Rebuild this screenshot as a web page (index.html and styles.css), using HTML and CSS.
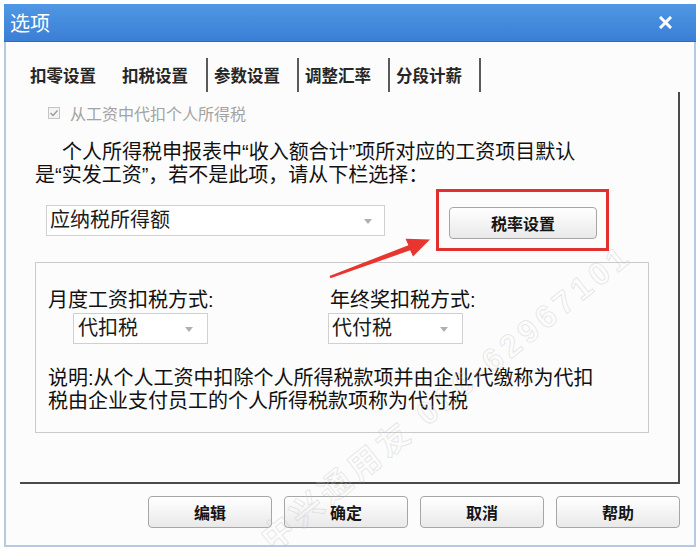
FILE: index.html
```html
<!DOCTYPE html>
<html lang="zh-CN">
<head>
<meta charset="utf-8">
<title>选项</title>
<link rel="stylesheet" href="styles.css">
</head>
<body>
<div class="window">
  <div class="titlebar">
    <span class="title">选项</span>
    <svg class="close" width="13" height="13" viewBox="0 0 13 13"><path d="M2 2 L11 11 M11 2 L2 11" stroke="#fff" stroke-width="3" stroke-linecap="square"/></svg>
  </div>
  <div class="body">
    <div class="tabs">
      <span class="tab t1">扣零设置</span>
      <span class="tab t2">扣税设置</span>
      <span class="tab sep">参数设置</span>
      <span class="tab sep">调整汇率</span>
      <span class="tab sep">分段计薪</span>
      <span class="tab sep end"></span>
    </div>
    <div class="panel">
      <label class="check"><span class="box"><svg width="10" height="10" viewBox="0 0 10 10"><path d="M1.5 5 L4 7.5 L8.5 2.5" fill="none" stroke="#9a9a9a" stroke-width="1.4"/></svg></span>从工资中代扣个人所得税</label>
      <p class="desc">个人所得税申报表中“收入额合计”项所对应的工资项目默认<br>是“实发工资”，若不是此项，请从下栏选择：</p>
      <div class="row">
        <div class="combo wide">应纳税所得额</div>
        <div class="highlight"><button class="btn rate">税率设置</button></div>
      </div>
      <div class="group">
        <div class="cols">
          <div class="col">
            <div class="lbl">月度工资扣税方式:</div>
            <div class="combo small c1">代扣税</div>
          </div>
          <div class="col">
            <div class="lbl">年终奖扣税方式:</div>
            <div class="combo small c2">代付税</div>
          </div>
        </div>
        <p class="note">说明:从个人工资中扣除个人所得税款项并由企业代缴称为代扣<br>税由企业支付员工的个人所得税款项称为代付税</p>
      </div>
    </div>
    <div class="actions">
      <button class="btn act">编辑</button>
      <button class="btn act">确定</button>
      <button class="btn act">取消</button>
      <button class="btn act">帮助</button>
    </div>
  </div>
</div>
<svg class="pointer" width="700" height="551" viewBox="0 0 700 551">
  <polygon points="329.5,276 408.4,245.2 405.5,238.8 430,239.5 413,256.5 410.2,250.3 330.5,278.2" fill="#e8352f"/>
</svg>
<div class="watermark">中兴通用友 010-62967101</div>
</body>
</html>
```

FILE: styles.css
```css
* { box-sizing: border-box; }
html, body { margin: 0; padding: 0; }
body {
  width: 700px;
  height: 551px;
  overflow: hidden;
  position: relative;
  background: #ffffff;
  font-family: "Liberation Sans", "Noto Sans CJK SC", sans-serif;
  color: #111;
}
.window {
  margin: 4px 0 0 4px;
  width: 692px;
  height: 543px;
  display: flex;
  flex-direction: column;
}
.titlebar {
  height: 38px;
  flex: none;
  background: linear-gradient(#5097e4, #3a7fd5);
  border-bottom: 1px solid #2e6cbe;
  display: flex;
  align-items: center;
  justify-content: space-between;
  padding: 0 24px 0 6px;
}
.title {
  color: #fff;
  font-size: 20px;
  line-height: 24px;
  font-family: "Noto Sans CJK SC", sans-serif;
}
.close { display: block; }
.body {
  flex: 1;
  background: #fcfcfc;
  border: 2px solid #b7c9df;
  border-top: none;
  display: flex;
  flex-direction: column;
}
.tabs {
  margin-top: 16px;
  height: 34px;
  display: flex;
  padding-left: 24px;
}
.tab {
  font-size: 16.5px;
  line-height: 34px;
  font-weight: bold;
  color: #262626;
  font-family: "Noto Sans CJK SC", sans-serif;
}
.t1 { margin-right: 26px; }
.t2 { padding-right: 18px; }
.sep {
  border-left: 2px solid #5a5a5a;
  padding-left: 6px;
  padding-right: 17px;
}
.end { padding: 0; width: 2px; }
.panel {
  margin-left: 14px;
  width: 660px;
  height: 392px;
  border-right: 2px solid #4a4a4a;
  border-bottom: 2px solid #4a4a4a;
  padding-top: 10px;
}
.check {
  display: flex;
  align-items: center;
  margin-left: 28px;
  height: 22px;
  font-size: 16px;
  color: #a3a3a3;
}
.box {
  width: 12px;
  height: 12px;
  border: 1px solid #c4c4c4;
  background: #f4f4f4;
  margin-right: 10px;
  display: flex;
  align-items: center;
  justify-content: center;
}
.box svg { display: block; }
.desc {
  margin: 17px 0 0 15px;
  font-size: 20px;
  line-height: 23px;
  text-indent: 27px;
}
.row {
  margin-top: 2px;
  display: flex;
  align-items: center;
}
.combo {
  position: relative;
  height: 31px;
  border: 1px solid #d0d0d0;
  background: #fff;
  font-size: 20px;
  line-height: 29px;
  padding-left: 3px;
  color: #1a1a1a;
}
.combo::after {
  content: "";
  position: absolute;
  top: 13px;
  right: 12px;
  border-left: 4px solid transparent;
  border-right: 4px solid transparent;
  border-top: 5px solid #b0b0b0;
}
.wide { margin-left: 26px; width: 339px; }
.highlight {
  margin-left: 51px;
  width: 173px;
  height: 62px;
  border: 3px solid #e2302f;
  padding: 15px 0 0 10px;
}
.btn {
  display: block;
  height: 32px;
  border: 1px solid #a6a6a6;
  border-radius: 4px;
  background: linear-gradient(#ffffff, #e9e9e9);
  font-family: "Noto Sans CJK SC", sans-serif;
  font-size: 16px;
  font-weight: bold;
  color: #151515;
  padding: 0;
}
.rate { width: 148px; }
.group {
  margin: 11px 0 0 15px;
  width: 614px;
  height: 171px;
  border: 1px solid #cbcbcb;
  padding: 25px 0 0 12px;
}
.cols {
  display: grid;
  grid-template-columns: 282px auto;
}
.lbl {
  font-size: 20px;
  line-height: 24px;
}
.small { width: 135px; margin-top: 1px; }
.c1 { margin-left: 25px; padding-left: 4px; }
.c2 { margin-left: -2px; }
.small::after { right: 14px; }
.note {
  margin: 23px 0 0 0;
  font-size: 20px;
  line-height: 23px;
}
.actions {
  margin-top: 12px;
  display: flex;
  justify-content: flex-end;
  gap: 12px;
  padding-right: 14px;
}
.act { width: 124px; }
.pointer {
  position: absolute;
  left: 0;
  top: 0;
  pointer-events: none;
}
.watermark {
  position: absolute;
  left: 264px;
  top: 518px;
  transform-origin: 0 50%;
  transform: rotate(-39deg);
  font-family: "Liberation Sans", "Noto Sans CJK SC", sans-serif;
  font-size: 32px;
  font-weight: bold;
  letter-spacing: 5px;
  white-space: nowrap;
  color: rgba(255, 255, 255, 0);
  -webkit-text-stroke: 1px rgba(190, 190, 190, 0.35);
  pointer-events: none;
}
```
